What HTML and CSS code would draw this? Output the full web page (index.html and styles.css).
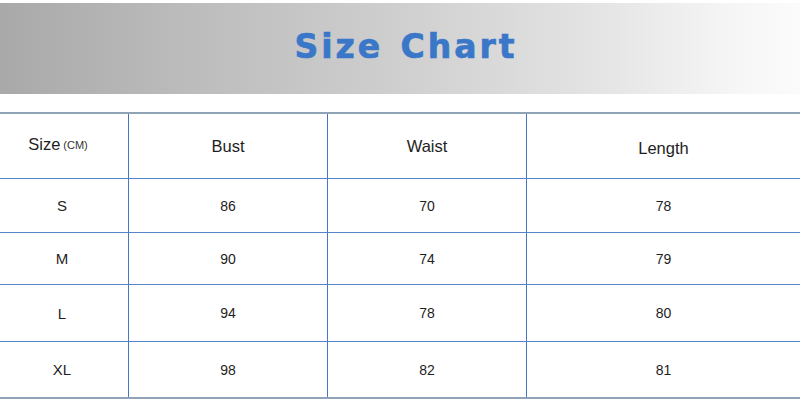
FILE: index.html
```html
<!DOCTYPE html>
<html>
<head>
<meta charset="utf-8">
<link rel="stylesheet" href="styles.css">
</head>
<body>
<div class="banner"><h1 class="title">Size Chart</h1></div>
<div class="chart">
  <div class="row head">
    <div class="cell first"><span>Size</span><small>(CM)</small></div>
    <div class="cell">Bust</div>
    <div class="cell">Waist</div>
    <div class="cell lower">Length</div>
  </div>
  <div class="row r-s">
    <div class="cell size">S</div><div class="cell">86</div><div class="cell">70</div><div class="cell">78</div>
  </div>
  <div class="row r-m">
    <div class="cell size">M</div><div class="cell">90</div><div class="cell">74</div><div class="cell">79</div>
  </div>
  <div class="row r-l">
    <div class="cell size">L</div><div class="cell">94</div><div class="cell">78</div><div class="cell">80</div>
  </div>
  <div class="row r-xl">
    <div class="cell size">XL</div><div class="cell">98</div><div class="cell">82</div><div class="cell">81</div>
  </div>
</div>
</body>
</html>
```

FILE: styles.css
```css
html, body { margin: 0; padding: 0; background: #fff; }
body { width: 800px; height: 403px; overflow: hidden; font-family: "Liberation Sans", Arial, sans-serif; color: #1e1e1e; }

.banner {
  margin-top: 3px;
  height: 91px;
  background: linear-gradient(to right, #a9a9a9 0%, #bdbdbd 25%, #cfcfcf 50%, #e4e4e4 75%, #f6f6f6 92%, #fbfbfb 100%);
  display: flex;
  align-items: center;
  justify-content: center;
}
.title {
  margin: 0 0 0 12px;
  font-family: "DejaVu Sans", sans-serif;
  font-weight: bold;
  font-size: 33px;
  letter-spacing: 3px;
  word-spacing: 3px;
  color: #3a77c8;
  -webkit-text-stroke: 0.7px #3a77c8;
  line-height: 1;
  padding-bottom: 4px;
}

.chart {
  margin-top: 18px;
  border-top: 2px solid #8fa2b6;
  border-bottom: 2px solid #8fa2b6;
}
.row {
  display: grid;
  grid-template-columns: 129px 199px 199px 1fr;
  box-sizing: border-box;
  border-bottom: 1px solid #5583c9;
}
.row.r-xl { border-bottom: none; }
.head { height: 65px; }
.r-s { height: 54px; }
.r-m { height: 52px; }
.r-l { height: 57px; }
.r-xl { height: 55px; }

.cell {
  display: flex;
  align-items: center;
  justify-content: center;
  border-right: 1px solid #4675c4;
  font-size: 14px;
}
.head .cell { font-size: 16.5px; }
.head .cell.first { padding-right: 12px; padding-bottom: 3px; }
.head .cell.lower { padding-top: 4px; }
.cell:last-child { border-right: none; }
.cell.size { font-size: 15px; padding-right: 4px; }
.head small { font-size: 11px; margin-left: 3px; color: #333; }
```
